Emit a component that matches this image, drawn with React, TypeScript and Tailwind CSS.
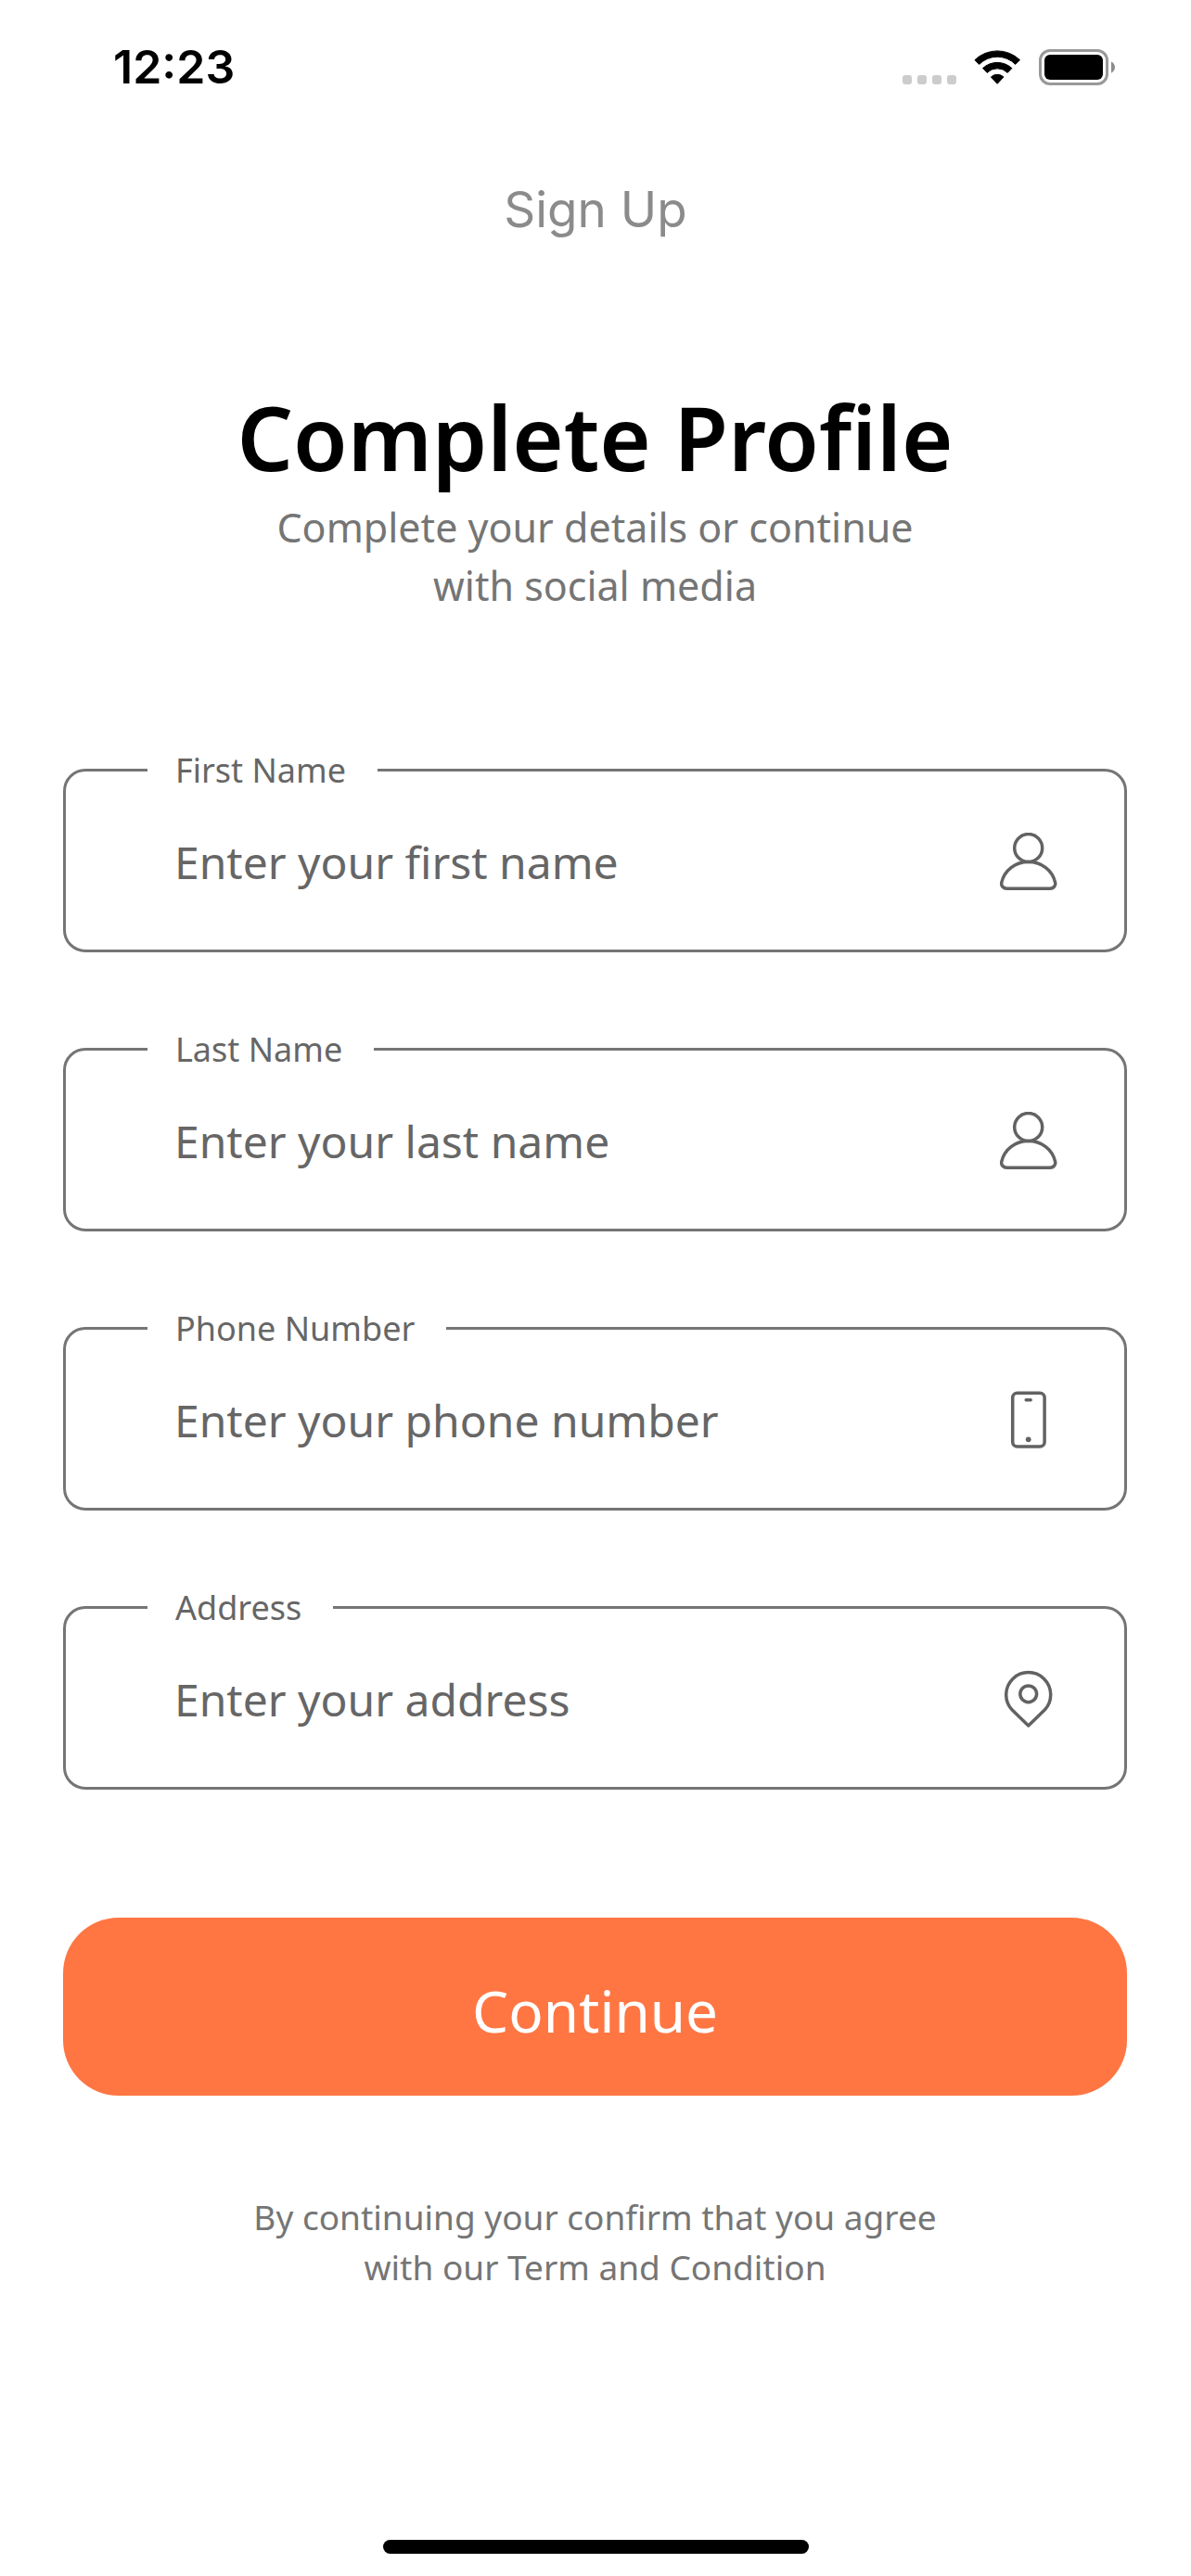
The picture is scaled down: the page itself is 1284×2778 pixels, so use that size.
import type { ReactNode } from "react";

function SignalDots() {
  return (
    <div className="mb-px flex gap-1.5" aria-hidden="true">
      {[0, 1, 2, 3].map((dot) => (
        <span key={dot} className="size-2.5 rounded-[3px] bg-[#cccccc]" />
      ))}
    </div>
  );
}

function WifiIcon() {
  return (
    <svg width="51" height="38" viewBox="0 0 51 38" aria-hidden="true">
      <g fill="#000" stroke="#000" strokeWidth="1" strokeLinejoin="round">
        <path d="M0.9 10.7 A35 35 0 0 1 49.5 10.7 L44.7 15.4 A27.4 27.4 0 0 0 5.7 15.4 Z" />
        <path d="M9.5 19.6 A23 23 0 0 1 40.9 19.6 L36.2 24.4 A15.6 15.6 0 0 0 14.2 24.4 Z" />
        <path d="M18.4 29 A10 10 0 0 1 32 29 L25.2 36.3 Z" />
      </g>
    </svg>
  );
}

function BatteryIcon() {
  return (
    <svg width="82" height="39" viewBox="0 0 82 39" aria-hidden="true">
      <rect x="1.5" y="1.5" width="72" height="36" rx="10.5" fill="none" stroke="#999" strokeWidth="3" />
      <rect x="6" y="6" width="63" height="27" rx="6" fill="#000" />
      <path d="M78 13.5 C80.4 14.6 82 16.8 82 19.6 C82 22.4 80.4 24.7 78 25.7 Z" fill="#8c8c8c" />
    </svg>
  );
}

function FieldIcon({ children }: { children: ReactNode }) {
  return (
    <svg
      width="62"
      height="62"
      viewBox="0 0 62 62"
      fill="none"
      stroke="#626262"
      strokeWidth="3.5"
      strokeLinejoin="round"
      strokeLinecap="round"
      aria-hidden="true"
      className="shrink-0"
    >
      {children}
    </svg>
  );
}

const userIcon = (
  <FieldIcon>
    <circle cx="30.7" cy="16.5" r="15" />
    <path d="M7.5 60.2 H54 C57.8 60.2 60.4 57.2 59.6 53.6 C56.4 40.4 45 31.6 30.7 31.6 C16.4 31.6 5 40.4 1.8 53.6 C1 57.2 3.7 60.2 7.5 60.2 Z" />
  </FieldIcon>
);

const phoneIcon = (
  <FieldIcon>
    <rect x="13.7" y="2.2" width="34.4" height="57.8" rx="5" />
    <path d="M28.2 9.8 H33.2" />
    <circle cx="30.7" cy="52.3" r="2.9" fill="#626262" stroke="none" />
  </FieldIcon>
);

const pinIcon = (
  <FieldIcon>
    <path d="M30.7 60 L13.2 43 A24 24 0 1 1 48.2 43 Z" />
    <circle cx="30.7" cy="25.8" r="8.9" />
  </FieldIcon>
);

type Field = {
  id: string;
  label: string;
  placeholder: string;
  type: string;
  icon: ReactNode;
};

const fields: Field[] = [
  { id: "first-name", label: "First Name", placeholder: "Enter your first name", type: "text", icon: userIcon },
  { id: "last-name", label: "Last Name", placeholder: "Enter your last name", type: "text", icon: userIcon },
  { id: "phone", label: "Phone Number", placeholder: "Enter your phone number", type: "tel", icon: phoneIcon },
  { id: "address", label: "Address", placeholder: "Enter your address", type: "text", icon: pinIcon },
];

function OutlinedField({ id, label, placeholder, type, icon }: Field) {
  return (
    <fieldset className="min-w-0 rounded-[24px] border-[3px] border-[#757575] pb-5">
      <legend className="ml-[88px] pr-[34px] pl-[30px] text-[36px] leading-[47px] text-[#666666]">
        <label htmlFor={id}>{label}</label>
      </legend>
      <div className="flex h-[150px] items-center pr-[72px] pl-[117px]">
        <input
          id={id}
          type={type}
          placeholder={placeholder}
          className="h-full min-w-0 flex-1 bg-transparent text-[48px] text-[#666666] outline-none placeholder:text-[#666666] placeholder:opacity-100"
        />
        {icon}
      </div>
    </fieldset>
  );
}

export default function App() {
  return (
    <div className="flex min-h-screen flex-col bg-white font-['Noto_Sans',sans-serif]">
      <header className="font-['Inter',sans-serif]">
        <div className="flex items-center justify-between pt-[42px] pr-[82px] pl-[122px]">
          <time className="text-[50px] leading-[60px] font-semibold text-black">12:23</time>
          <div className="flex items-end gap-[19px]">
            <SignalDots />
            <WifiIcon />
            <BatteryIcon />
          </div>
        </div>
        <p className="mt-[94px] text-center text-[53px] leading-[60px] text-[#8b8b8b]">Sign Up</p>
      </header>

      <main className="pt-[165px] pr-[69px] pl-[68px] text-center">
        <h1 className="text-[95px] leading-[100px] font-semibold text-black">Complete Profile</h1>
        <p className="mt-4 text-[43px] leading-[63px] text-[#757575]">
          Complete your details or continue
          <br />
          with social media
        </p>

        <form className="mt-36 text-left" onSubmit={(event) => event.preventDefault()}>
          <div className="flex flex-col gap-[81px]">
            {fields.map((field) => (
              <OutlinedField key={field.id} {...field} />
            ))}
          </div>
          <button
            type="submit"
            className="mt-[138px] h-[192px] w-full rounded-[60px] bg-[#ff7643] pt-2 text-[62px] text-white"
          >
            Continue
          </button>
        </form>

        <p className="mt-[104px] text-[37px] leading-[54px] text-[#757575]">
          By continuing your confirm that you agree
          <br />
          with our Term and Condition
        </p>
      </main>

      <div className="mx-auto mt-auto mb-6 h-[15px] w-[459px] rounded-full bg-black" />
    </div>
  );
}
